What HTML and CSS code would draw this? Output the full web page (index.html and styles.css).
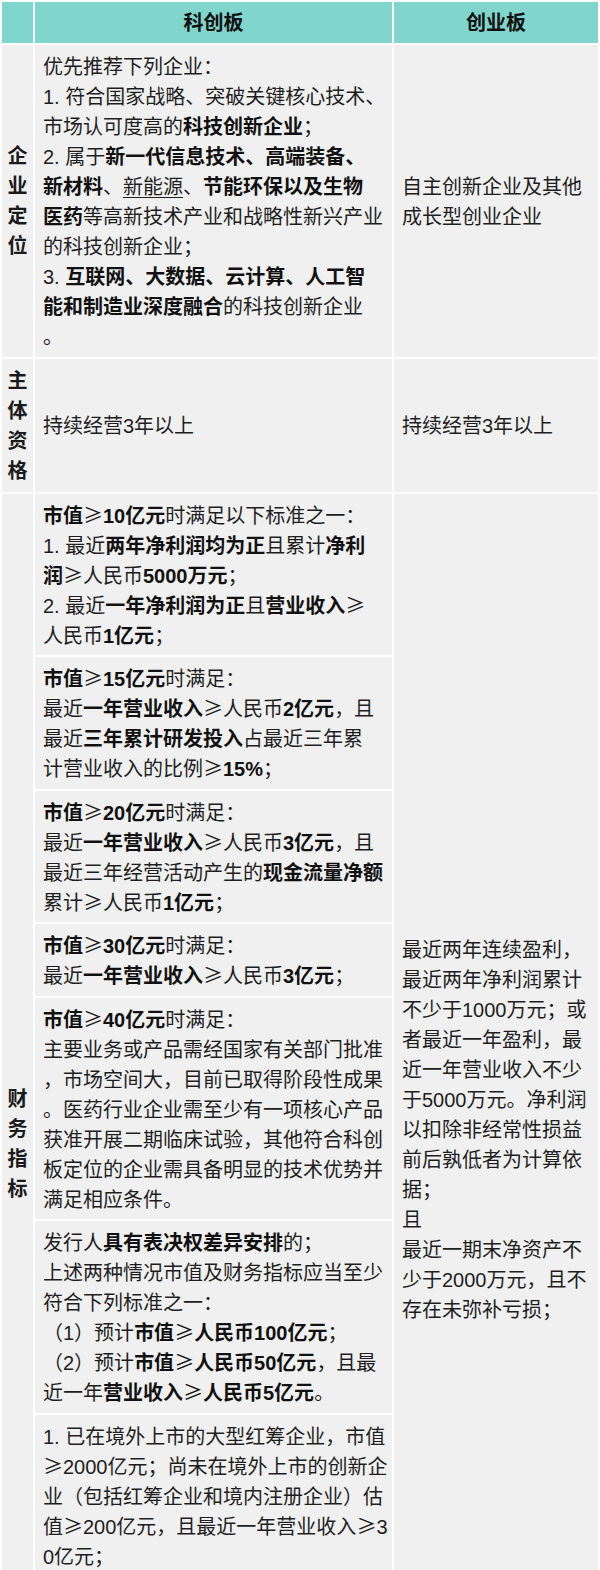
FILE: index.html
```html
<!DOCTYPE html>
<html lang="zh-CN">
<head>
<meta charset="utf-8">
<title>科创板与创业板上市条件对比</title>
<link rel="stylesheet" href="styles.css">
</head>
<body>
<table class="cmp">
  <colgroup>
    <col class="c-label">
    <col class="c-star">
    <col class="c-gem">
  </colgroup>
  <thead>
    <tr>
      <th class="head"></th>
      <th class="head">科创板</th>
      <th class="head">创业板</th>
    </tr>
  </thead>
  <tbody>
    <tr>
      <th class="label">企业定位</th>
      <td class="cell">优先推荐下列企业：<br>1. 符合国家战略、突破关键核心技术、<br>市场认可度高的<b>科技创新企业</b>；<br>2. 属于<b>新一代信息技术、高端装备、</b><br><b>新材料</b>、<u>新能源</u>、<b>节能环保以及生物</b><br><b>医药</b>等高新技术产业和战略性新兴产业<br>的科技创新企业；<br>3. <b>互联网、大数据、云计算、人工智</b><br><b>能和制造业深度融合</b>的科技创新企业<br>。</td>
      <td class="cell">自主创新企业及其他<br>成长型创业企业</td>
    </tr>
    <tr>
      <th class="label">主体资格</th>
      <td class="cell">持续经营3年以上</td>
      <td class="cell">持续经营3年以上</td>
    </tr>
    <tr>
      <th class="label" rowspan="7">财务指标</th>
      <td class="cell"><b>市值</b><span class="ge">≥</span><b>10亿元</b>时满足以下标准之一：<br>1. 最近<b>两年净利润均为正</b>且累计<b>净利</b><br><b>润</b><span class="ge">≥</span>人民币<b>5000万元</b>；<br>2. 最近<b>一年净利润为正</b>且<b>营业收入</b><span class="ge">≥</span><br>人民币<b>1亿元</b>；</td>
      <td class="cell" rowspan="7">最近两年连续盈利，<br>最近两年净利润累计<br>不少于1000万元；或<br>者最近一年盈利，最<br>近一年营业收入不少<br>于5000万元。净利润<br>以扣除非经常性损益<br>前后孰低者为计算依<br>据；<br>且<br>最近一期末净资产不<br>少于2000万元，且不<br>存在未弥补亏损；<br>&nbsp;</td>
    </tr>
    <tr>
      <td class="cell"><b>市值</b><span class="ge">≥</span><b>15亿元</b>时满足：<br>最近<b>一年营业收入</b><span class="ge">≥</span>人民币<b>2亿元</b>，且<br>最近<b>三年累计研发投入</b>占最近三年累<br>计营业收入的比例<span class="ge">≥</span><b>15%</b>；</td>
    </tr>
    <tr>
      <td class="cell"><b>市值</b><span class="ge">≥</span><b>20亿元</b>时满足：<br>最近<b>一年营业收入</b><span class="ge">≥</span>人民币<b>3亿元</b>，且<br>最近三年经营活动产生的<b>现金流量净额</b><br>累计<span class="ge">≥</span>人民币<b>1亿元</b>；</td>
    </tr>
    <tr>
      <td class="cell"><b>市值</b><span class="ge">≥</span><b>30亿元</b>时满足：<br>最近<b>一年营业收入</b><span class="ge">≥</span>人民币<b>3亿元</b>；</td>
    </tr>
    <tr>
      <td class="cell"><b>市值</b><span class="ge">≥</span><b>40亿元</b>时满足：<br>主要业务或产品需经国家有关部门批准<br>，市场空间大，目前已取得阶段性成果<br>。医药行业企业需至少有一项核心产品<br>获准开展二期临床试验，其他符合科创<br>板定位的企业需具备明显的技术优势并<br>满足相应条件。</td>
    </tr>
    <tr>
      <td class="cell">发行人<b>具有表决权差异安排</b>的；<br>上述两种情况市值及财务指标应当至少<br>符合下列标准之一：<br>（1）预计<b>市值<span class="ge">≥</span>人民币100亿元</b>；<br>（2）预计<b>市值<span class="ge">≥</span>人民币50亿元</b>，且最<br>近一年<b>营业收入<span class="ge">≥</span>人民币5亿元</b>。</td>
    </tr>
    <tr>
      <td class="cell cell-last">1. 已在境外上市的大型红筹企业，市值<br><span class="ge">≥</span>2000亿元；尚未在境外上市的创新企<br>业（包括红筹企业和境内注册企业）估<br>值<span class="ge">≥</span>200亿元，且最近一年营业收入<span class="ge">≥</span>3<br>0亿元；<br>2. 营业收入快速增长，拥有自主研发、<br>国际领先技术，同行业竞争中处于相对<br>优势地位的尚未在境外上市红筹企业，<br>市值及财务指标应当至少符合下列标准<br>之一：（1）预计市值<span class="ge">≥</span>人民币100亿元；<br>（2）预计市值<span class="ge">≥</span>人民币50亿元，且最<br>近一年营业收入<span class="ge">≥</span>人民币5亿元。</td>
    </tr>
  </tbody>
</table>
</body>
</html>
```

FILE: styles.css
```css
* {
  box-sizing: border-box;
}

body {
  margin: 0;
  background: #ffffff;
  font-family: "Liberation Sans", "Noto Sans CJK SC", sans-serif;
  font-size: 20px;
  line-height: 30px;
  color: #1e1e1e;
}

.cmp {
  width: 600px;
  table-layout: fixed;
  border-collapse: separate;
  border-spacing: 2px;
  background: #ffffff;
}

.c-label { width: 31px; }
.c-star { width: 357px; }
.c-gem { width: 204px; }

.head {
  background: #80d5cc;
  color: #111111;
  font-weight: 700;
  text-align: center;
  vertical-align: middle;
  padding: 6px 0 5px;
}

.label {
  background: #f0f0f0;
  color: #1a1a1a;
  font-weight: 700;
  text-align: center;
  vertical-align: middle;
  padding: 7px 0 6px;
}

.cell {
  background: #f0f0f0;
  vertical-align: middle;
  text-align: left;
  white-space: nowrap;
  padding: 7px 4px 4.5px 8px;
}

.cell-last {
  padding-bottom: 12px;
}

.cell b {
  font-weight: 700;
  color: #111111;
}

.cell u {
  text-decoration: underline;
  text-decoration-thickness: 1px;
  text-underline-offset: 3px;
}

.ge {
  font-family: "Noto Sans CJK SC", sans-serif;
  font-weight: 400;
  line-height: 1;
  font-feature-settings: "fwid" 1;
}
```
